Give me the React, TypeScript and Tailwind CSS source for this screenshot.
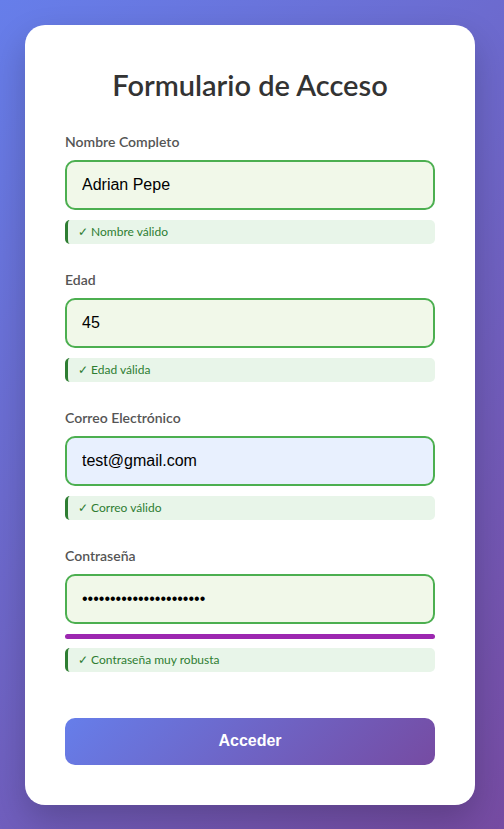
import React from "react";

type Field = {
  label: string;
  type: string;
  value: string;
  message: string;
  autofill?: boolean;
  strength?: boolean;
};

const fields: Field[] = [
  { label: "Nombre Completo", type: "text", value: "Adrian Pepe", message: "✓ Nombre válido" },
  { label: "Edad", type: "text", value: "45", message: "✓ Edad válida" },
  { label: "Correo Electrónico", type: "email", value: "test@gmail.com", message: "✓ Correo válido", autofill: true },
  { label: "Contraseña", type: "password", value: "aaaaaaaaaaaaaaaaaaaaaa", message: "✓ Contraseña muy robusta", strength: true },
];

function FormField({ field }: { field: Field }) {
  return (
    <div className="mb-[25px]">
      <label className="block mb-2 text-[14px] leading-[21px] font-semibold text-[#555] font-['Lato',sans-serif]">
        {field.label}
      </label>
      <input
        type={field.type}
        value={field.value}
        readOnly
        className={`block w-full h-[50px] px-[15px] rounded-[10px] border-2 border-[#4caf50] text-[16px] text-black outline-none font-['Liberation_Sans',Arial,sans-serif] ${
          field.autofill ? "bg-[#e8f0fe]" : "bg-[#f1f8e9]"
        }`}
      />
      {field.strength && <div className="mt-[10px] h-[5px] w-full rounded-full bg-[#9c27b0]" />}
      <div
        className={`${field.strength ? "mt-[9px]" : "mt-[10px]"} h-[24px] flex items-center pl-[10px] rounded-[5px] border-l-[3px] border-[#2e7d32] bg-[#e8f5e9] text-[12px] text-[#2e7d32] font-['Lato',sans-serif]`}
      >
        {field.message}
      </div>
    </div>
  );
}

export default function App() {
  return (
    <div className="min-h-screen flex items-center pl-[25px] bg-[linear-gradient(135deg,#667eea_0%,#764ba2_100%)]">
      <div className="w-[450px] bg-white rounded-[20px] p-10 shadow-[0_15px_35px_rgba(0,0,0,0.2)]">
        <h1 className="text-center text-[29px] leading-[40px] font-semibold text-[#333] mb-[26px] font-['Lato',sans-serif]">
          Formulario de Acceso
        </h1>
        {fields.map((f) => (
          <FormField key={f.label} field={f} />
        ))}
        <button className="mt-[21px] w-full h-[47px] rounded-[10px] bg-[linear-gradient(135deg,#667eea_0%,#764ba2_100%)] text-white text-[16px] font-bold font-['Liberation_Sans',Arial,sans-serif]">
          Acceder
        </button>
      </div>
    </div>
  );
}
